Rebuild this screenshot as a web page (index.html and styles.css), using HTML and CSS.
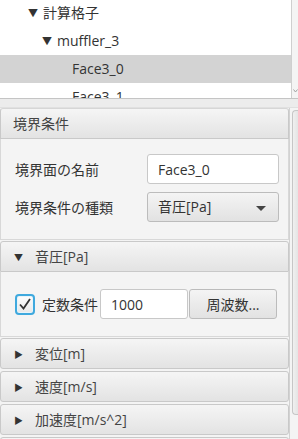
FILE: index.html
```html
<!DOCTYPE html>
<html lang="ja">
<head>
    <meta charset="UTF-8">
    <title>境界条件</title>
    <link rel="stylesheet" href="styles.css">
</head>
<body>
    <div class="tree">
        <div class="rows">
            <div class="row lvl1"><span class="arrow">▼</span>計算格子</div>
            <div class="row lvl2"><span class="arrow">▼</span>muffler_3</div>
            <div class="row lvl3 selected">Face3_0</div>
            <div class="row lvl3">Face3_1</div>
        </div>
        <div class="vbar">
            <svg class="vbar-arrow" width="5" height="4" viewBox="0 0 5 4"><path d="M0.5 0.5 L2.5 3 L4.5 0.5" fill="none" stroke="#a0a0a0" stroke-width="1"/></svg>
        </div>
    </div>
    <div class="divider"></div>
    <div class="props">
        <div class="panes">
            <div class="pane-head first">境界条件</div>
            <div class="pane-body grid">
                <label class="lbl">境界面の名前</label>
                <input class="field" type="text" value="Face3_0">
                <label class="lbl">境界条件の種類</label>
                <div class="combo">音圧[Pa]<span class="combo-arrow"></span></div>
            </div>
            <div class="pane-head"><span class="tri">▼</span>音圧[Pa]</div>
            <div class="pane-body line">
                <span class="check">
                    <svg width="14" height="14" viewBox="0 0 14 14"><path d="M2 7.5 L5.5 11.5 L12 2" fill="none" stroke="#333" stroke-width="1.8"/></svg>
                </span>
                <span class="lbl">定数条件</span>
                <input class="field num" type="text" value="1000">
                <button class="btn">周波数...</button>
            </div>
            <div class="pane-head closed"><span class="tri">▶</span>変位[m]</div>
            <div class="pane-head closed"><span class="tri">▶</span>速度[m/s]</div>
            <div class="pane-head closed"><span class="tri">▶</span>加速度[m/s^2]</div>
            <div class="pane-head closed"></div>
        </div>
        <div class="vbar2"><div class="thumb"></div></div>
    </div>
</body>
</html>
```

FILE: styles.css
```css
body { margin: 0; width: 298px; height: 439px; overflow: hidden; background: #f4f4f4; font-family: "Open Sans", "Noto Sans CJK JP", sans-serif; font-size: 14px; color: #333;}
.tree { display: flex; height: 98px; background: #fff; border-bottom: 1px solid #c4c4c4; overflow: hidden;}
.rows { flex: 1; margin-top: -1px;}
.row { height: 28px; line-height: 28px; white-space: nowrap; color: #333;}
.row.selected { background: #d3d3d3;}
.lvl1 { padding-left: 28px;}
.lvl2 { padding-left: 42px;}
.lvl3 { padding-left: 72px;}
.arrow { display: inline-block; width: 15px; font-size: 10px; vertical-align: 1px;}
.vbar { width: 6px; border-left: 1px solid #cfcfcf; background: #f4f4f4; display: flex; flex-direction: column; justify-content: flex-end; align-items: center; padding-bottom: 5px;}
.divider { height: 8px; background: #ececec; border-bottom: 1px solid #e0e0e0;}
.props { display: flex; height: 331px; overflow: hidden;}
.panes { width: 290px; display: flex; flex-direction: column;}
.panes > div { flex: none;}
.pane-head { height: 29px; line-height: 29px; padding-left: 12px; border: 1px solid #c9c9c9; border-radius: 3px 3px 0 0; background: linear-gradient(#f5f5f5, #e3e3e3); color: #444; white-space: nowrap;}
.pane-head.first { border-top-color: #d6d6d6;}
.pane-head.closed { border-radius: 3px; margin-bottom: 2px;}
.tri { display: inline-block; width: 21px; margin-left: 1px; font-size: 9px; color: #333; vertical-align: 1px;}
.pane-body { background: #f4f4f4; border: 1px solid #d8d8d8; border-top: none;}
.grid { display: grid; grid-template-columns: 132px 132px; row-gap: 8px; align-content: start; align-items: center; height: 85px; padding: 15px 0 0 14px; margin-bottom: 1px;}
.lbl { color: #333; white-space: nowrap;}
.field { box-sizing: border-box; height: 30px; width: 132px; border: 1px solid #c8c8c8; border-radius: 3px; background: #fff; padding: 0 10px; font: inherit; color: #333; outline: none;}
.combo { box-sizing: border-box; height: 30px; width: 132px; line-height: 28px; padding-left: 10px; border: 1px solid #bcbcbc; border-radius: 3px; background: linear-gradient(#f4f4f4, #e2e2e2); position: relative; color: #333;}
.combo-arrow { position: absolute; right: 12px; top: 13px; border-left: 5px solid transparent; border-right: 5px solid transparent; border-top: 5px solid #444;}
.line { display: flex; align-items: center; height: 64px; padding-left: 14px; margin-bottom: 1px;}
.check { box-sizing: border-box; display: flex; align-items: center; justify-content: center; width: 20px; height: 21px; border: 2px solid #3fa9de; border-radius: 4px; background: linear-gradient(#fdfdfd, #e8e8e8); box-shadow: inset 0 0 0 1px #e8f4fa;}
.line .lbl { margin: 0 2px 0 7px;}
.num { width: 88px; margin-right: 1px;}
.btn { box-sizing: border-box; width: 88px; height: 30px; border: 1px solid #bcbcbc; border-radius: 3px; background: linear-gradient(#f4f4f4, #e2e2e2); font: inherit; color: #333; padding: 0;}
.vbar2 { width: 8px; border-left: 1px solid #d2d2d2; background: #f4f4f4; display: flex; justify-content: flex-end;}
.thumb { width: 5px; height: 303px; margin-top: 2px; border: 1px solid #c6c6c6; border-right: none; border-radius: 4px 0 0 4px; background: linear-gradient(90deg, #f0f0f0, #e4e4e4);}
```
